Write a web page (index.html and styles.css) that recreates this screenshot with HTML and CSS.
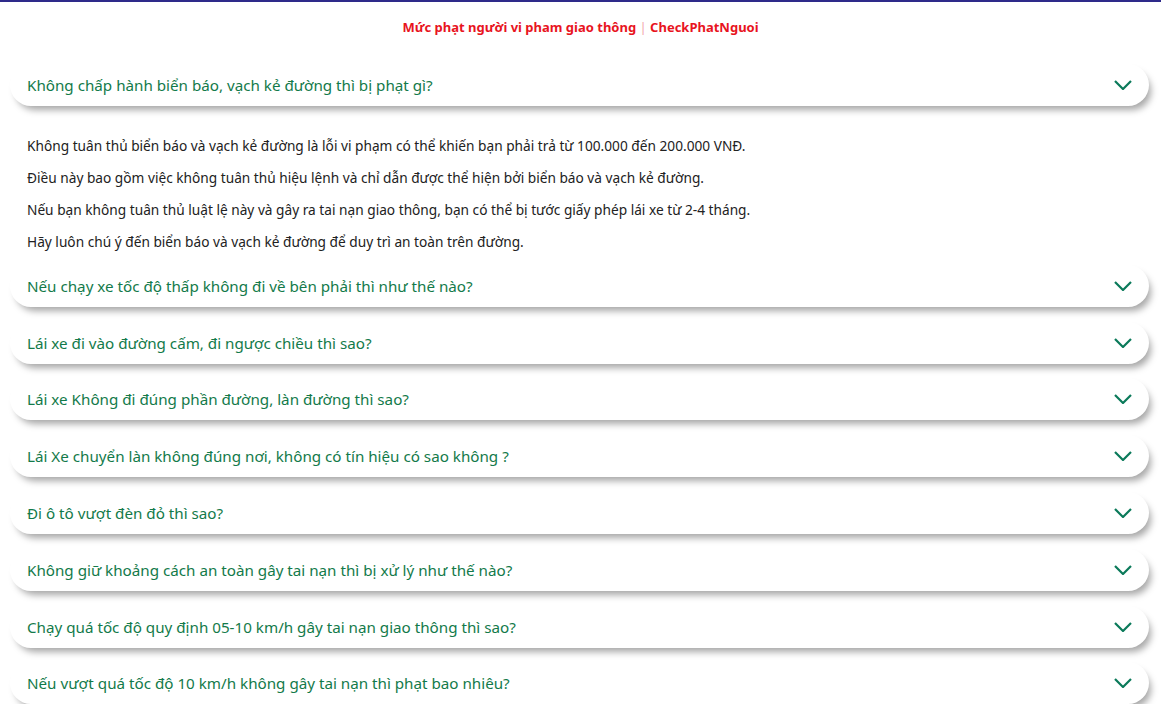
FILE: index.html
```html
<!DOCTYPE html>
<html lang="vi">
<head>
  <meta charset="UTF-8" />
  <meta name="viewport" content="width=device-width, initial-scale=1" />
  <title>Mức phạt người vi phạm giao thông - CheckPhatNguoi</title>
  <link rel="stylesheet" href="styles.css">
</head>
<body>

<div class="topbar"></div>

<p class="page-title">Mức phạt người vi pham giao thông <span class="sep">|</span> CheckPhatNguoi</p>

<div class="faq">
  <div class="faq-item open">
    <div class="faq-q">
      <span>Không chấp hành biển báo, vạch kẻ đường thì bị phạt gì?</span>
      <svg class="chev" viewBox="0 0 18 10" width="18" height="10"><path d="M1 1l8 8 8-8" /></svg>
    </div>
    <div class="faq-a">
      <p>Không tuân thủ biển báo và vạch kẻ đường là lỗi vi phạm có thể khiến bạn phải trả từ 100.000 đến 200.000 VNĐ.</p>
      <p>Điều này bao gồm việc không tuân thủ hiệu lệnh và chỉ dẫn được thể hiện bởi biển báo và vạch kẻ đường.</p>
      <p>Nếu bạn không tuân thủ luật lệ này và gây ra tai nạn giao thông, bạn có thể bị tước giấy phép lái xe từ 2-4 tháng.</p>
      <p>Hãy luôn chú ý đến biển báo và vạch kẻ đường để duy trì an toàn trên đường.</p>
    </div>
  </div>

  <div class="faq-item">
    <div class="faq-q">
      <span>Nếu chạy xe tốc độ thấp không đi về bên phải thì như thế nào?</span>
      <svg class="chev" viewBox="0 0 18 10" width="18" height="10"><path d="M1 1l8 8 8-8" /></svg>
    </div>
  </div>

  <div class="faq-item">
    <div class="faq-q">
      <span>Lái xe đi vào đường cấm, đi ngược chiều thì sao?</span>
      <svg class="chev" viewBox="0 0 18 10" width="18" height="10"><path d="M1 1l8 8 8-8" /></svg>
    </div>
  </div>

  <div class="faq-item">
    <div class="faq-q">
      <span>Lái xe Không đi đúng phần đường, làn đường thì sao?</span>
      <svg class="chev" viewBox="0 0 18 10" width="18" height="10"><path d="M1 1l8 8 8-8" /></svg>
    </div>
  </div>

  <div class="faq-item">
    <div class="faq-q">
      <span>Lái Xe chuyển làn không đúng nơi, không có tín hiệu có sao không ?</span>
      <svg class="chev" viewBox="0 0 18 10" width="18" height="10"><path d="M1 1l8 8 8-8" /></svg>
    </div>
  </div>

  <div class="faq-item">
    <div class="faq-q">
      <span>Đi ô tô vượt đèn đỏ thì sao?</span>
      <svg class="chev" viewBox="0 0 18 10" width="18" height="10"><path d="M1 1l8 8 8-8" /></svg>
    </div>
  </div>

  <div class="faq-item">
    <div class="faq-q">
      <span>Không giữ khoảng cách an toàn gây tai nạn thì bị xử lý như thế nào?</span>
      <svg class="chev" viewBox="0 0 18 10" width="18" height="10"><path d="M1 1l8 8 8-8" /></svg>
    </div>
  </div>

  <div class="faq-item">
    <div class="faq-q">
      <span>Chạy quá tốc độ quy định 05-10 km/h gây tai nạn giao thông thì sao?</span>
      <svg class="chev" viewBox="0 0 18 10" width="18" height="10"><path d="M1 1l8 8 8-8" /></svg>
    </div>
  </div>

  <div class="faq-item">
    <div class="faq-q">
      <span>Nếu vượt quá tốc độ 10 km/h không gây tai nạn thì phạt bao nhiêu?</span>
      <svg class="chev" viewBox="0 0 18 10" width="18" height="10"><path d="M1 1l8 8 8-8" /></svg>
    </div>
  </div>
</div>

</body>
</html>
```

FILE: styles.css
```css
body {
  margin: 0;
  font-family: "Noto Sans", "Open Sans", sans-serif;
  background: #fff;
  color: #222;
}
.topbar {
  height: 2px;
  background: #2e2a8a;
}
.page-title {
  margin: 0;
  padding: 16px 0 0;
  height: 46px;
  box-sizing: border-box;
  text-align: center;
  font-size: 13px;
  font-weight: 700;
  color: #e8141e;
}
.sep {
  color: #f3a6aa;
  font-weight: 400;
}
.faq {
  padding: 16px 12px 0 10px;
  display: flex;
  flex-direction: column;
  gap: 14.8px;
}
.faq-q {
  height: 42px;
  display: flex;
  align-items: center;
  justify-content: space-between;
  padding: 0 17px 0 17px;
  background: #fff;
  border-radius: 21px;
  box-shadow: 4px 6px 7px -2px rgba(0,0,0,0.35);
  font-size: 15.2px;
  color: #137a4a;
}
.chev {
  fill: none;
  stroke: #0b7a5a;
  stroke-width: 2.2;
}
.faq-a {
  padding: 24px 0 0 17px;
  margin-bottom: -8px;
}
.faq-a p {
  margin: 0;
  line-height: 32px;
  font-size: 13.7px;
  color: #222;
}
```
